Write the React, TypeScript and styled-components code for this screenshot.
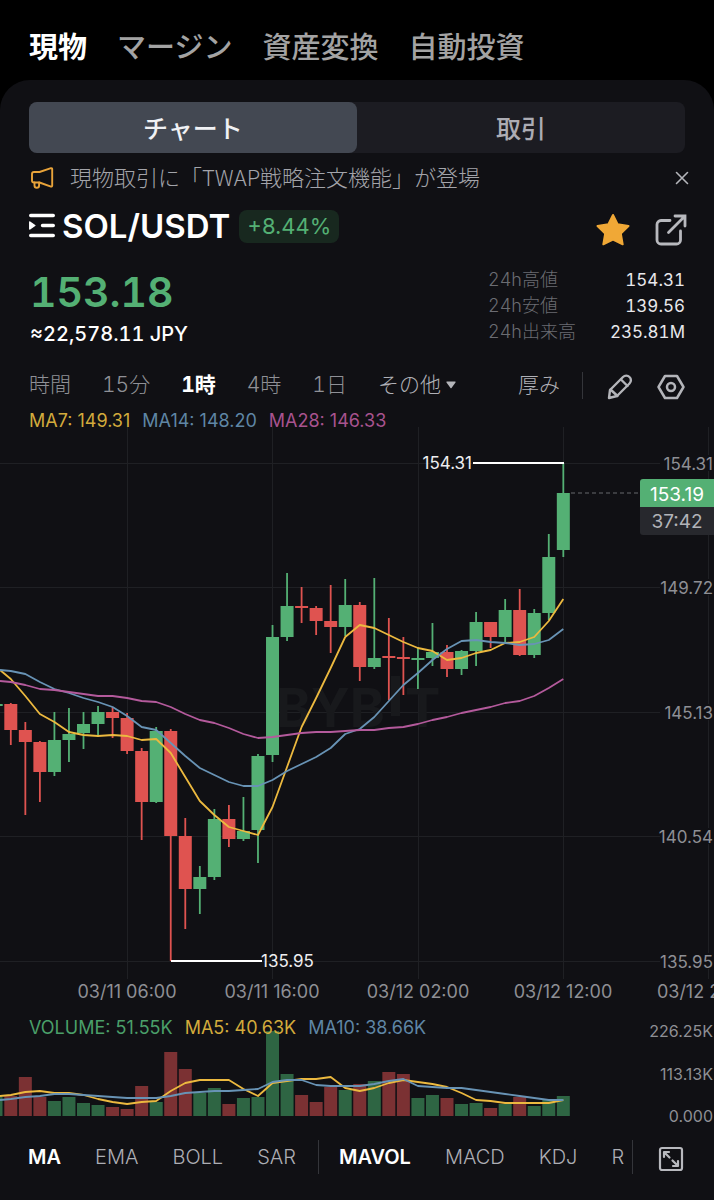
import React from "react";
import styled, { createGlobalStyle } from "styled-components";

const UP = "#54b074";
const DOWN = "#df5350";
const YELLOW = "#ecb93f";
const BLUE = "#6893b5";
const PURPLE = "#b45a9c";
const MUTED = "#a3a4aa";
const UI_FONT = `Inter, "Noto Sans CJK JP", sans-serif`;

const GlobalStyle = createGlobalStyle`
  * { box-sizing: border-box; }
  body { margin: 0; background: #000; font-family: ${UI_FONT}; }
  button { font: inherit; color: inherit; background: none; border: 0; padding: 0; margin: 0; cursor: pointer; }
  svg { display: block; }
`;

const Screen = styled.div`
  background: #000;
  color: #fff;
  overflow: hidden;
`;

const MainTabs = styled.nav`
  display: flex;
  gap: 30px;
  height: 80px;
  padding: 16px 29px 0;
  align-items: center;
`;

const MainTab = styled.button<{ $active?: boolean }>`
  font-size: 29px;
  line-height: 40px;
  font-weight: ${(p) => (p.$active ? 700 : 500)};
  color: ${(p) => (p.$active ? "#fff" : "#a3a3a3")};
  white-space: nowrap;
`;

const Card = styled.main`
  background: #101014;
  border-radius: 30px 30px 0 0;
  padding-top: 22px;
`;

const Segmented = styled.div`
  display: flex;
  height: 51px;
  margin: 0 29px;
  background: #1c1c22;
  border-radius: 8px;
`;

const Segment = styled.button<{ $active?: boolean }>`
  flex: 1;
  padding-bottom: 2px;
  border-radius: 8px;
  font-size: 25px;
  font-weight: 500;
  background: ${(p) => (p.$active ? "#434852" : "transparent")};
  color: ${(p) => (p.$active ? "#f0f1f4" : "#acacb4")};
`;

const Notice = styled.div`
  display: flex;
  align-items: center;
  height: 50px;
  padding: 0 24px 0 30px;
  gap: 16px;
`;

const NoticeText = styled.p`
  flex: 1;
  margin: 0;
  padding-bottom: 4px;
  font-family: "Noto Sans CJK JP", sans-serif;
  font-size: 22px;
  font-weight: 300;
  color: ${MUTED};
`;

const IconButton = styled.button`
  display: flex;
  flex: none;
`;

const PairRow = styled.div`
  display: flex;
  align-items: center;
  height: 48px;
  padding: 0 27px 2px 28px;
`;

const PairName = styled.h1`
  margin: 0 9px 0 6px;
  font-size: 33px;
  line-height: 40px;
  font-weight: 600;
`;

const Change = styled.span`
  height: 33px;
  padding: 0 8px;
  border-radius: 8px;
  background: #18281f;
  color: ${UP};
  font-size: 22px;
  line-height: 33px;
`;

const PairActions = styled.div`
  display: flex;
  gap: 24px;
  margin: 8px 0 0 auto;
`;

const Summary = styled.section`
  display: flex;
  justify-content: space-between;
  height: 112px;
  padding: 16px 29px 0 30px;
`;

const Price = styled.div`
  color: ${UP};
  font-size: 41px;
  line-height: 51px;
  font-weight: 600;
  font-variant-numeric: tabular-nums;
`;

const FiatPrice = styled.div`
  font-size: 20px;
  line-height: 33px;
  font-weight: 500;
  font-variant-numeric: tabular-nums;
`;

const Stats = styled.dl`
  display: grid;
  grid-template-columns: auto auto;
  grid-auto-rows: 26px;
  width: 197px;
  margin: 0;
  font-size: 18px;
  line-height: 26px;
  font-variant-numeric: tabular-nums;
  dt { color: #6b6c72; font-weight: 300; }
  dd { margin: 0; text-align: right; color: #e8e8ec; font-size: 17px; }
`;

const Intervals = styled.nav`
  display: flex;
  align-items: center;
  height: 44px;
  padding: 0 29px;
`;

const IntervalList = styled.div`
  display: flex;
  gap: 31px;
`;

const Interval = styled.button<{ $active?: boolean; $bright?: boolean }>`
  display: flex;
  align-items: center;
  gap: 5px;
  font-size: 21px;
  line-height: 28px;
  font-variant-numeric: tabular-nums;
  white-space: nowrap;
  font-weight: ${(p) => (p.$active ? 700 : 300)};
  color: ${(p) => (p.$active ? "#fff" : p.$bright ? "#b0b1b7" : "#8f9096")};
`;

const ChartTools = styled.div`
  display: flex;
  align-items: center;
  margin-left: auto;
`;

const Divider = styled.span<{ $tall?: boolean }>`
  flex: none;
  width: 1px;
  height: ${(p) => (p.$tall ? 34 : 27)}px;
  background: #34353a;
`;

const ToolDivider = styled(Divider)`
  margin-left: 22px;
`;

const ToolIcons = styled.div`
  display: flex;
  gap: 24px;
  margin: 3px 0 0 24px;
`;

const Legend = styled.div`
  display: flex;
  gap: 12px;
  padding: 0 29px;
  font-size: 18px;
  line-height: 20px;
  white-space: nowrap;
`;

const LegendItem = styled.span<{ $color: string }>`
  color: ${(p) => p.$color};
`;

const PriceLegend = styled(Legend)`
  height: 20px;
  padding-top: 4px;
`;

const ChartSvg = styled.svg`
  width: 100%;
  height: auto;
  font-family: Inter, sans-serif;
`;

const VolumePanel = styled.section`
  position: relative;
`;

const VolumeLegend = styled(Legend)`
  position: absolute;
  top: 8px;
  left: 0;
`;

const IndicatorBar = styled.footer`
  display: flex;
  align-items: center;
  height: 74px;
  padding: 0 30px 12px 28px;
`;

const IndicatorScroll = styled.div`
  display: flex;
  flex: 1;
  align-items: center;
  min-width: 0;
  overflow: hidden;
`;

const IndicatorGroup = styled.div`
  display: flex;
  gap: 34px;
  margin-right: 22px;
`;

const SecondGroup = styled(IndicatorGroup)`
  margin: 0 0 0 20px;
`;

const Indicator = styled.button<{ $active?: boolean }>`
  font-size: 20px;
  line-height: 28px;
  font-weight: ${(p) => (p.$active ? 600 : 300)};
  color: ${(p) => (p.$active ? "#fff" : "#adaeb4")};
`;

const ExpandButton = styled(IconButton)`
  margin: 3px 0 0 25px;
`;

/* Candle: direction, body top, body bottom, wick top, wick bottom */
type Candle = [1 | 0, number, number, number, number];
const STEP = 14.54;
const FIRST_X = 10.8;
const cx = (i: number) => FIRST_X + STEP * i;

const CANDLES: Candle[] = [
  [0, 704, 730, 703, 745], [0, 730, 742, 722, 815], [0, 742, 772, 741, 802],
  [1, 740, 772, 712, 776], [1, 734, 740, 708, 762], [1, 724, 733, 712, 749],
  [1, 712, 724, 706, 736], [0, 712, 718, 707, 738], [0, 718, 751, 713, 754],
  [0, 751, 802, 748, 840], [1, 731, 802, 727, 803], [0, 731, 836, 729, 961],
  [0, 836, 889, 818, 929], [1, 877, 889, 866, 914], [1, 819, 877, 809, 880],
  [0, 819, 839, 805, 847], [1, 831, 839, 797, 841], [1, 756, 830, 754, 863],
  [1, 637, 755, 625, 762], [1, 606, 637, 573, 641], [0, 606, 608, 587, 623],
  [0, 608, 621, 606, 635], [0, 621, 627, 585, 653], [1, 605, 627, 579, 636],
  [0, 605, 667, 602, 681], [1, 658, 667, 578, 669], [0, 656, 658, 618, 700],
  [0, 657, 659, 637, 695], [1, 658, 660, 648, 689], [1, 652, 658, 623, 666],
  [0, 652, 669, 645, 677], [1, 651, 669, 650, 675], [1, 622, 651, 612, 666],
  [0, 622, 637, 622, 648], [1, 610, 637, 599, 643], [0, 610, 655, 589, 656],
  [1, 613, 655, 609, 658], [1, 557, 613, 534, 620], [1, 493, 550, 463, 557],
];

const MA7 = [679, 696, 714, 722, 732, 735, 736, 735, 736, 740, 739, 753, 777, 801, 815, 827, 831, 835, 807, 767, 727, 698, 668, 637, 625, 628, 635, 642, 648, 651, 660, 658, 653, 650, 643, 642, 637, 621, 599];
const MA14 = [671, 674, 682, 689, 693, 698, 702, 707, 716, 727, 730, 743, 756, 768, 775, 782, 786, 786, 780, 771, 764, 757, 748, 734, 729, 717, 701, 685, 673, 660, 649, 641, 640, 642, 643, 645, 644, 640, 629];
const MA28 = [682, 685, 689, 690, 692, 694, 696, 696, 698, 701, 702, 707, 714, 720, 723, 728, 734, 738, 737, 735, 733, 732, 732, 731, 730, 730, 728, 727, 724, 720, 717, 713, 710, 707, 703, 701, 696, 688, 679];

const VOLUMES = [1096, 1077, 1097, 1101, 1097, 1103, 1105, 1107, 1109, 1086, 1102, 1052, 1069, 1093, 1088, 1104, 1098, 1097, 1031, 1074, 1095, 1102, 1087, 1090, 1084, 1081, 1072, 1074, 1098, 1095, 1098, 1104, 1103, 1108, 1104, 1097, 1106, 1099, 1096];
const VMA5 = [1095, 1092, 1091, 1093, 1093, 1095, 1099, 1102, 1104, 1102, 1101, 1091, 1083, 1080, 1080, 1080, 1089, 1096, 1083, 1081, 1079, 1079, 1077, 1088, 1091, 1088, 1083, 1080, 1082, 1084, 1087, 1093, 1100, 1101, 1103, 1103, 1103, 1103, 1100];
const VMA10 = [1099, 1097, 1096, 1094, 1094, 1095, 1096, 1097, 1098, 1098, 1098, 1096, 1093, 1092, 1091, 1091, 1090, 1089, 1082, 1080, 1080, 1085, 1086, 1086, 1086, 1084, 1081, 1079, 1086, 1087, 1088, 1088, 1090, 1092, 1094, 1096, 1098, 1100, 1100];

const GRID_Y: [number, string][] = [[463, "154.31"], [587, "149.72"], [712, "145.13"], [836, "140.54"], [961, "135.95"]];
const GRID_X: [number, string][] = [[127, "03/11 06:00"], [272, "03/11 16:00"], [418, "03/12 02:00"], [563, "03/12 12:00"], [708, "03/12 22:00"]];

const Line = ({ ys, start, color }: { ys: number[]; start: number; color: string }) => (
  <polyline
    fill="none"
    stroke={color}
    strokeWidth="1.8"
    strokeLinejoin="round"
    points={`0,${start} ` + ys.map((y, i) => `${cx(i)},${y}`).join(" ")}
  />
);

const PriceChart = () => (
  <ChartSvg viewBox="0 427 714 583" role="img" aria-label="SOL/USDT">
    <g stroke="#1f2024">
      {GRID_Y.map(([y]) => <line key={y} x1="0" x2="714" y1={y + 0.5} y2={y + 0.5} />)}
      {GRID_X.map(([x]) => <line key={x} x1={x + 0.5} x2={x + 0.5} y1="427" y2="979" />)}
    </g>
    <g fill="#18191c" fontSize="53" fontWeight="700">
      <text x="276" y="727">BYB</text>
      <rect x="391" y="676" width="9" height="40" />
      <text x="405" y="727">T</text>
    </g>
    <rect x="-10" y="704" width="12.7" height="2" fill={UP} />
    {CANDLES.map(([up, top, bottom, high, low], i) => (
      <g key={i} fill={up ? UP : DOWN}>
        <rect x={cx(i) - 0.9} y={high} width="1.8" height={low - high} />
        <rect x={cx(i) - 6.5} y={top} width="13" height={bottom - top} />
      </g>
    ))}
    <Line ys={MA7} start={670} color={YELLOW} />
    <Line ys={MA14} start={670} color={BLUE} />
    <Line ys={MA28} start={681} color={PURPLE} />
    <g stroke="#fff" strokeWidth="2">
      <line x1="473" x2="564" y1="463" y2="463" />
      <line x1="171" x2="262" y1="961" y2="961" />
    </g>
    <g fill="#eeeef0" fontSize="17">
      <text x="472" y="469" textAnchor="end">154.31</text>
      <text x="261" y="967">135.95</text>
    </g>
    <line x1="571" x2="640" y1="493" y2="493" stroke="#67686d" strokeDasharray="4 3" />
    <g fill="#8e8f94" fontSize="17">
      {GRID_Y.map(([y, label]) => (
        <g key={label}>
          <rect x="660" y={y - 8} width="54" height="16" fill="#101014" />
          <text x="713" y={y + 7} textAnchor="end">{label}</text>
        </g>
      ))}
    </g>
    <g fill="#8e8f94" fontSize="18" textAnchor="middle">
      {GRID_X.map(([x, label]) => <text key={label} x={x} y="998">{label}</text>)}
    </g>
    <path d="M640 507v-25a3 3 0 0 1 3-3h71v28z" fill={UP} />
    <path d="M640 507h74v28h-71a3 3 0 0 1-3-3z" fill="#27282d" />
    <g fontSize="19" textAnchor="middle">
      <text x="677" y="501" fill="#fff">153.19</text>
      <text x="677" y="528" fill="#b2b3b8">37:42</text>
    </g>
  </ChartSvg>
);

const VolumeChart = () => (
  <ChartSvg viewBox="0 1010 714 116" role="img" aria-label="VOLUME">
    <rect x="-10" y="1097" width="12.5" height="19" fill="#2e6543" />
    {VOLUMES.map((y, i) => (
      <rect key={i} x={cx(i) - 6.5} y={y} width="13" height={1116 - y} fill={CANDLES[i][0] ? "#2e6543" : "#7b3133"} />
    ))}
    <Line ys={VMA5} start={1096} color={YELLOW} />
    <Line ys={VMA10} start={1100} color={BLUE} />
    <g fill="#8e8f94" fontSize="16" textAnchor="end">
      <text x="713" y="1037">226.25K</text>
      <text x="713" y="1080">113.13K</text>
      <text x="713" y="1122">0.000</text>
    </g>
  </ChartSvg>
);

const stroke = { fill: "none", strokeLinecap: "round", strokeLinejoin: "round" } as const;

const Megaphone = () => (
  <svg width="24" height="24" viewBox="0 0 24 24" stroke="#e8a33a" strokeWidth="1.9" {...stroke}>
    <path d="M2 8a2 2 0 0 1 2-2h5.500L21 2.200a1 1 0 0 1 1.200.900v16.600a1 1 0 0 1-1.200.900L9.500 16.500H4a2 2 0 0 1-2-2z" />
    <path d="M4.500 16.500v3a2.300 2.300 0 0 0 4.600 0v-3" />
  </svg>
);

const Close = () => (
  <svg width="16" height="16" viewBox="0 0 16 16" stroke="#b4b5ba" strokeWidth="1.6" {...stroke}>
    <path d="M2.500 2.500l11 11M13.500 2.500l-11 11" />
  </svg>
);

const PairMenu = () => (
  <svg width="28" height="28" viewBox="0 0 28 28" stroke="#fff" strokeWidth="3.4" {...stroke}>
    <path d="M2.700 3.500h22.600M14.500 13.500h10.800M2.700 23.500h22.600" />
    <path d="M1.800 10v7l5-3.500z" fill="#fff" strokeWidth="1.5" />
  </svg>
);

const Star = () => (
  <svg width="36" height="34" viewBox="0 0 36 34" fill="#f0a836" stroke="#f0a836" strokeWidth="2" strokeLinejoin="round">
    <path d="M18 2l4.600 9.300L33.500 13l-7.700 7.500 1.900 10.800L18 26.700l-9.700 4.600 1.900-10.800L2.500 13l10.900-1.700z" />
  </svg>
);

const Share = () => (
  <svg width="32" height="34" viewBox="0 0 32 34" stroke="#b8b9be" strokeWidth="2.800" {...stroke}>
    <path d="M15 7.500H6a4 4 0 0 0-4 4V27a4 4 0 0 0 4 4h15.500a4 4 0 0 0 4-4v-9" />
    <path d="M20 3h10v10M29.500 3.500L13.500 19.500" strokeLinejoin="miter" />
  </svg>
);

const Pencil = () => (
  <svg width="26" height="26" viewBox="0 0 26 26" stroke="#b4b5ba" strokeWidth="2.400" {...stroke}>
    <path d="M2 24l1-8L16 3a4.500 4.500 0 0 1 6.500 0 4.500 4.500 0 0 1 0 6.500L10 22z" />
    <path d="M3.500 15.500l7 6.500M14 5.500l6.500 6.500" />
  </svg>
);

const Hexagon = () => (
  <svg width="28" height="26" viewBox="0 0 28 26" stroke="#b4b5ba" strokeWidth="2.500" {...stroke}>
    <path d="M8 2h12l6.500 11L20 24H8L1.500 13z" />
    <circle cx="14" cy="13" r="4" />
  </svg>
);

const Caret = () => (
  <svg width="10" height="8" viewBox="0 0 10 8" fill="#b4b5ba">
    <path d="M1 .5h8a.6.6 0 0 1 .5 1L5.500 7a.7.7 0 0 1-1 0L.5 1.500a.6.6 0 0 1 .5-1z" />
  </svg>
);

const Expand = () => (
  <svg width="26" height="26" viewBox="0 0 26 26" stroke="#b8b9be" strokeWidth="2.200" {...stroke}>
    <rect x="2" y="2" width="22" height="22" rx="2" />
    <path d="M6 11V6h5M6.500 6.500l5 5M20 15v5h-5M19.500 19.500l-5-5" />
  </svg>
);

export default function App() {
  return (
    <Screen>
      <GlobalStyle />
      <MainTabs>
        <MainTab $active>現物</MainTab>
        <MainTab>マージン</MainTab>
        <MainTab>資産変換</MainTab>
        <MainTab>自動投資</MainTab>
      </MainTabs>
      <Card>
        <Segmented>
          <Segment $active>チャート</Segment>
          <Segment>取引</Segment>
        </Segmented>
        <Notice>
          <Megaphone />
          <NoticeText>現物取引に「TWAP戦略注文機能」が登場</NoticeText>
          <IconButton aria-label="閉じる"><Close /></IconButton>
        </Notice>
        <PairRow>
          <IconButton aria-label="銘柄一覧"><PairMenu /></IconButton>
          <PairName>SOL/USDT</PairName>
          <Change>+8.44%</Change>
          <PairActions>
            <IconButton aria-label="お気に入り"><Star /></IconButton>
            <IconButton aria-label="共有"><Share /></IconButton>
          </PairActions>
        </PairRow>
        <Summary>
          <div>
            <Price>153.18</Price>
            <FiatPrice>≈22,578.11 JPY</FiatPrice>
          </div>
          <Stats>
            <dt>24h高値</dt><dd>154.31</dd>
            <dt>24h安値</dt><dd>139.56</dd>
            <dt>24h出来高</dt><dd>235.81M</dd>
          </Stats>
        </Summary>
        <Intervals>
          <IntervalList>
            <Interval>時間</Interval>
            <Interval>15分</Interval>
            <Interval $active>1時</Interval>
            <Interval>4時</Interval>
            <Interval>1日</Interval>
            <Interval $bright>その他<Caret /></Interval>
          </IntervalList>
          <ChartTools>
            <Interval $bright>厚み</Interval>
            <ToolDivider />
            <ToolIcons>
              <IconButton aria-label="描画"><Pencil /></IconButton>
              <IconButton aria-label="設定"><Hexagon /></IconButton>
            </ToolIcons>
          </ChartTools>
        </Intervals>
        <PriceLegend>
          <LegendItem $color="#d3ab3c">MA7: 149.31</LegendItem>
          <LegendItem $color="#5f86a5">MA14: 148.20</LegendItem>
          <LegendItem $color="#a8538f">MA28: 146.33</LegendItem>
        </PriceLegend>
        <PriceChart />
        <VolumePanel>
          <VolumeChart />
          <VolumeLegend>
            <LegendItem $color="#4a9f69">VOLUME: 51.55K</LegendItem>
            <LegendItem $color="#d3ab3c">MA5: 40.63K</LegendItem>
            <LegendItem $color="#5f86a5">MA10: 38.66K</LegendItem>
          </VolumeLegend>
        </VolumePanel>
        <IndicatorBar>
          <IndicatorScroll>
            <IndicatorGroup>
              <Indicator $active>MA</Indicator>
              <Indicator>EMA</Indicator>
              <Indicator>BOLL</Indicator>
              <Indicator>SAR</Indicator>
            </IndicatorGroup>
            <Divider $tall />
            <SecondGroup>
              <Indicator $active>MAVOL</Indicator>
              <Indicator>MACD</Indicator>
              <Indicator>KDJ</Indicator>
              <Indicator>R</Indicator>
            </SecondGroup>
          </IndicatorScroll>
          <Divider $tall />
          <ExpandButton aria-label="全画面"><Expand /></ExpandButton>
        </IndicatorBar>
      </Card>
    </Screen>
  );
}
